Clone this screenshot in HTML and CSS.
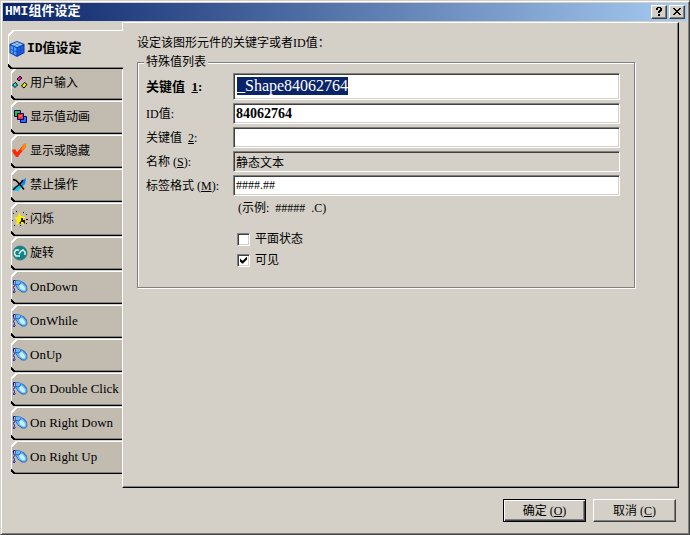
FILE: index.html
```html
<!DOCTYPE html>
<html lang="zh-CN">
  <head>
    <meta charset="UTF-8" />
    <meta name="viewport" content="width=device-width, initial-scale=1.0" />
    <title>HMI组件设定</title>
    <link rel="stylesheet" href="styles.css">
  </head>
  <body>
    <svg class="sprite" aria-hidden="true">
      <symbol id="mouse" viewBox="0 0 16 16">
        <path d="M3.500 1.500h-2v3l1 2-1 2 1 2-1 3h1l1-1" fill="none" stroke="#0a0a9a" />
        <path d="M3 1l5 .5 4 2 3 3.500 .5 4-2 2.500H10L6 10.500 3 6z" fill="#2c6cb4" />
        <path d="M4 2h4l3 2 3.500 4v3l-1 1.500h-3L6.500 10 4 6z" fill="#6cb8fa" />
        <path d="M7 6l3-1 3 3.500V11l-2 .5-3-2z" fill="#c2f0ff" />
        <path d="M4 5.500l3 .5 2-3" fill="none" stroke="#1c68cc" />
      </symbol>
    </svg>
    <div class="window">
      <header class="titlebar">
        <h1>HMI组件设定</h1>
        <button type="button" class="caption-btn" aria-label="帮助">
          <svg viewBox="0 0 10 10" shape-rendering="crispEdges">
            <path d="M3 0h4v1h1v3H7v1H6v1H4V4h1V3h1V1H4v2H2V1h1zM4 7h2v2H4z" />
          </svg>
        </button>
        <button type="button" class="caption-btn" aria-label="关闭">
          <svg viewBox="0 0 10 10" shape-rendering="crispEdges">
            <path d="M1 1h2v1h1v1h2V2h1V1h2v1H8v1H7v1H6v1h1v1h1v1h1v1H7V7H6V6H4v1H3v1H1V7h1V6h1V5h1V4H3V3H2V2H1z" />
          </svg>
        </button>
      </header>
      <main class="content">
        <nav class="tabs">
          <button type="button" class="tab active">
            <svg viewBox="0 0 16 16">
              <path d="M8 0l7.500 3v9L8 16 .5 12V3z" fill="#0c3ca8" />
              <path d="M8 1l6 2.500L8 6 2 3.500z" fill="#9cd0ff" />
              <path d="M1.500 4.500L7.500 7v7.500L1.500 11.500z" fill="#4c98fc" />
              <path d="M14.500 4.500L8.500 7v7.500l6-3z" fill="#1c5ce8" />
              <path d="M1.500 8l6 3 7-3M4.500 5.500v8M11.500 5.500v8" fill="none" stroke="#1048b8" stroke-width=".7" />
              <path d="M5 2l6 3M11 2L5 5" fill="none" stroke="#3c84e8" stroke-width=".7" />
            </svg>
            ID值设定
          </button>
          <button type="button" class="tab">
            <svg viewBox="0 0 16 16" stroke="#000">
              <path d="M5 4l3-3 2 2-3 3z" fill="#f0c" />
              <path d="M.5 10l3-2.500 2 2.500-2.500 2.500z" fill="#0ee" />
              <path d="M9.500 11l3-3.500 2.500 2-3 3.500z" fill="#fe0" />
            </svg>
            用户输入
          </button>
          <button type="button" class="tab">
            <svg viewBox="0 0 16 16" stroke="#000080">
              <path d="M2.500 1.500h6v6h-6z" fill="#28c810" />
              <path d="M9.500 7.500h5v6h-6v-4z" fill="#1878f8" />
              <path d="M5.500 4.500h6v6h-6z" fill="#ff3020" />
              <path d="M7 7h3" stroke="#ff9080" />
            </svg>
            显示值动画
          </button>
          <button type="button" class="tab">
            <svg viewBox="0 0 16 16">
              <path d="M0 7l3-1 2 3 3-3 4-5 2-.5-.5 4L8 11l-2 3H4L1 10z" fill="#fa2c08" />
              <path d="M9 6l3-5 2-.5-.5 4L10 8z" fill="#ff8c00" />
            </svg>
            显示或隐藏
          </button>
          <button type="button" class="tab">
            <svg viewBox="0 0 16 16">
              <path d="M0 11l3-2 2 1 3-3 3-4 3-2-1 6-4 4-3 3H3z" fill="#10c8f0" />
              <path d="M10 4l4-3-1 6-3 2z" fill="#1880ff" />
              <path d="M1 2.500l3 1 4 4 4 5M11 3L8 7l-4 3-3 3" fill="none" stroke="#000" stroke-width="1.500" />
            </svg>
            禁止操作
          </button>
          <button type="button" class="tab">
            <svg viewBox="0 0 16 16">
              <path d="M7 1l2 4 4 1-2 3 1 5-4-2-4 2 1-5-3-3h4z" fill="#fff000" />
              <path d="M9 7h2v2h2v4l-2-2H9v2l-2-1 2-2z" fill="#221c00" />
              <path d="M1 2h1v1H1zM11 1h1v1h-1zM14 3h1v1h-1zM0 9h1v1H0zM14 8h2v1h-2zM2 14h1v1H2zM8 14h1v1H8zM14 12h1v1h-1zM4 0h1v1H4z" />
            </svg>
            闪烁
          </button>
          <button type="button" class="tab">
            <svg viewBox="0 0 16 16">
              <circle cx="8" cy="8" r="7" fill="#108488" stroke="#3c7880" />
              <path d="M7 5H4L2.500 7v2L4 11h4M7 9l2-3 2-1 2 2v3" fill="none" stroke="#dff4f2" stroke-width="1.500" />
            </svg>
            旋转
          </button>
          <button type="button" class="tab"><svg><use href="#mouse" /></svg>OnDown</button>
          <button type="button" class="tab"><svg><use href="#mouse" /></svg>OnWhile</button>
          <button type="button" class="tab"><svg><use href="#mouse" /></svg>OnUp</button>
          <button type="button" class="tab"><svg><use href="#mouse" /></svg>On Double Click</button>
          <button type="button" class="tab"><svg><use href="#mouse" /></svg>On Right Down</button>
          <button type="button" class="tab"><svg><use href="#mouse" /></svg>On Right Up</button>
        </nav>
        <section class="panel">
          <p class="intro">设定该图形元件的关键字或者ID值：</p>
          <fieldset>
            <legend>特殊值列表</legend>
            <div class="fields">
              <label for="key1" class="strong">关键值 &nbsp;<u>1</u>:</label>
              <input type="text" id="key1" class="large" value="_Shape84062764" spellcheck="false" />
              <label for="idvalue">ID值:</label>
              <input type="text" id="idvalue" class="id" value="84062764" />
              <label for="key2">关键值 &nbsp;<u>2</u>:</label>
              <input type="text" id="key2" />
              <label for="name">名称 (<u>S</u>):</label>
              <input type="text" id="name" value="静态文本" readonly />
              <label for="format">标签格式 (<u>M</u>):</label>
              <input type="text" id="format" value="####.##" />
              <p class="hint">(示例:&nbsp; ##### &nbsp;.C)</p>
              <label class="check"><input type="checkbox" />平面状态</label>
              <label class="check"><input type="checkbox" checked />可见</label>
            </div>
          </fieldset>
        </section>
      </main>
      <footer>
        <button type="button" class="btn default">确定 (<u>O</u>)</button>
        <button type="button" class="btn">取消 (<u>C</u>)</button>
      </footer>
    </div>

    <script>
      const key = document.getElementById("key1");
      key.focus();
      key.select();
    </script>
  </body>
</html>
```
FILE: styles.css
```css
* {
  box-sizing: border-box;
}
body {
  margin: 0;
  background-color: #d4d0c8;
  color: #000;
}
body,
button,
input {
  font-family: "Liberation Serif", "Noto Sans CJK SC", serif;
  font-size: 12px;
  line-height: 16px;
}
p {
  margin: 0;
}
.sprite {
  display: none;
}
.window {
  display: flex;
  flex-direction: column;
  min-height: 100vh;
  padding: 2px;
  border: 1px solid;
  border-color: #d4d0c8 #404040 #404040 #d4d0c8;
  box-shadow: inset 1px 1px #fff, inset -1px -1px #808080;
}

/* title bar */
.titlebar {
  display: flex;
  align-items: center;
  gap: 2px;
  height: 18px;
  padding: 0 2px;
  background: linear-gradient(to right, #0a246a, #a6caf0);
}
.titlebar h1 {
  flex: 1;
  margin: 0;
  color: #fff;
  font-family: "Liberation Mono", "Noto Sans CJK SC", monospace;
  font-size: 13px;
  line-height: 18px;
}
.caption-btn {
  display: flex;
  justify-content: center;
  width: 16px;
  height: 14px;
  padding: 1px;
  border: 1px solid;
  border-color: #fff #404040 #404040 #fff;
  background-color: #d4d0c8;
  box-shadow: inset -1px -1px #808080;
}
.caption-btn svg {
  width: 10px;
  height: 10px;
}

/* tabs */
.content {
  display: flex;
  flex: 1;
  padding: 1px 8px 0 5px;
}
.tabs {
  display: flex;
  flex-direction: column;
  gap: 1px;
  width: 114px;
  padding-top: 8px;
}
.tab {
  display: flex;
  align-items: center;
  gap: 2px;
  height: 33px;
  margin-left: 3px;
  padding: 0 0 1px 1px;
  border: none;
  background:
    linear-gradient(135deg, #d4d0c8 3px, #fff 3px, #fff 5px, transparent 5px) 0 0 / 6px 6px,
    linear-gradient(45deg, #d4d0c8 2px, #000 2px, #000 4px, transparent 4px) 0 100% / 6px 6px,
    linear-gradient(#000, #000) 0 100% / 100% 1px,
    linear-gradient(#808080, #808080) 0 calc(100% - 1px) / 100% 1px,
    linear-gradient(#fff, #fff) 0 0 / 100% 1px,
    linear-gradient(#fff, #fff) 0 0 / 1px 100%;
  background-color: #c2bbb0;
  background-repeat: no-repeat;
  font-size: 13px;
  white-space: nowrap;
}
.tab:nth-child(-n + 7) {
  font-size: 12px;
}
.tab svg {
  flex: none;
  width: 16px;
  height: 16px;
}
.tab.active {
  z-index: 1;
  height: 39px;
  margin: 0 -1px -3px 0;
  background-color: #d4d0c8;
  font-family: "Liberation Mono", "Noto Sans CJK SC", monospace;
  font-size: 13px;
  font-weight: bold;
}

/* panel */
.panel {
  flex: 1;
  padding: 11px 43px 14px 14px;
  border: 1px solid;
  border-color: #fff #000 #000 #fff;
  box-shadow: inset -1px -1px #808080;
}
.intro {
  line-height: 18px;
}
fieldset {
  margin: 3px 0 0;
  padding: 4px 14px 18px 8px;
  border: 1px solid #808080;
  box-shadow: 1px 1px #fff, inset 1px 1px #fff;
}
legend {
  margin-left: -2px;
  padding: 0 2px;
  background-color: #d4d0c8;
  line-height: 14px;
}
.fields {
  display: grid;
  grid-template-columns: 87px 1fr;
  row-gap: 3px;
  align-items: center;
}
.strong {
  font-size: 13px;
  font-weight: bold;
}
input[type="text"] {
  width: 100%;
  height: 21px;
  padding: 0 2px;
  border: 1px solid;
  border-color: #808080 #fff #fff #808080;
  border-radius: 0;
  outline: none;
  background-color: #fff;
  box-shadow: inset 1px 1px #404040, inset -1px -1px #d4d0c8;
}
input[type="text"].large {
  height: 27px;
  padding: 0 3px 2px;
  font-size: 16px;
}
input[type="text"].id {
  font-size: 14px;
  font-weight: bold;
}
input[type="text"]:read-only {
  background-color: #d4d0c8;
}
input::selection {
  background-color: #0a246a;
  color: #fff;
}
.hint,
.check {
  grid-column: 2;
}
.hint {
  margin-bottom: 10px;
  padding-left: 5px;
  line-height: 18px;
}
.check {
  display: flex;
  align-items: center;
  gap: 5px;
  height: 18px;
  padding-left: 4px;
}
.check input {
  appearance: none;
  width: 13px;
  height: 13px;
  margin: 0;
  border: 1px solid;
  border-color: #808080 #fff #fff #808080;
  background-color: #fff;
  box-shadow: inset 1px 1px #404040, inset -1px -1px #d4d0c8;
}
.check input:checked::before {
  content: "";
  display: block;
  width: 7px;
  height: 7px;
  margin: 2px;
  background-color: #000;
  clip-path: polygon(0 2px, 2px 4px, 3px 4px, 7px 0, 7px 3px, 3px 7px, 2px 7px, 0 5px);
}

/* bottom buttons */
footer {
  display: flex;
  justify-content: flex-end;
  gap: 7px;
  padding: 11px 11px 10px;
}
.btn {
  width: 83px;
  height: 23px;
  padding: 0;
  border: 1px solid;
  border-color: #fff #404040 #404040 #fff;
  background-color: #d4d0c8;
  box-shadow: inset -1px -1px #808080;
}
.btn.default {
  border-color: #000;
  box-shadow: inset 1px 1px #fff, inset -1px -1px #404040, inset -2px -2px #808080;
}
```
